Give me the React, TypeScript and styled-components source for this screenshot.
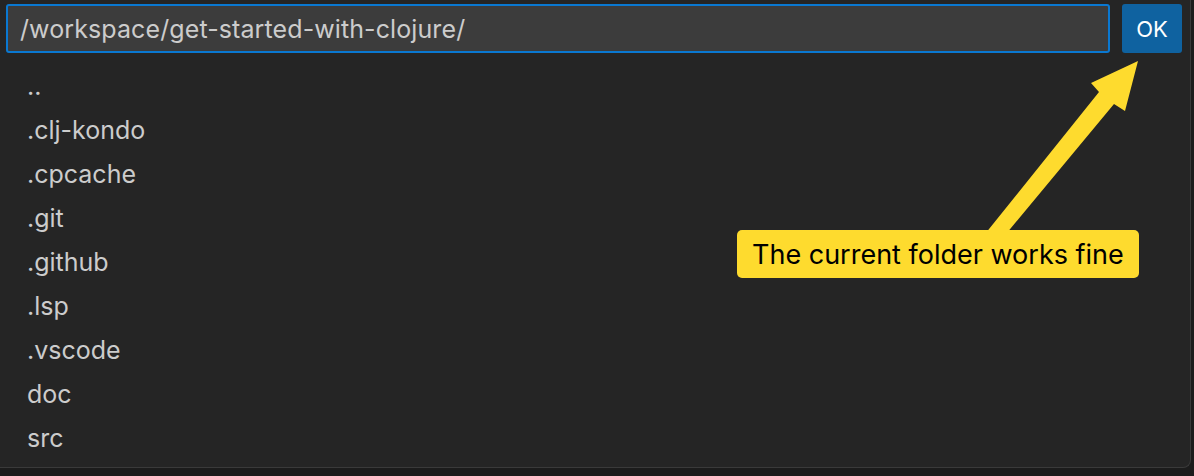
import * as React from 'react';
import styled, { createGlobalStyle } from 'styled-components';

const entries = ['..', '.clj-kondo', '.cpcache', '.git', '.github', '.lsp', '.vscode', 'doc', 'src'];

const GlobalStyle = createGlobalStyle`
  html, body {
    margin: 0;
    padding: 0;
    background: #1c1c1c;
  }

  body {
    font-family: Inter, "Noto Sans", sans-serif;
    -webkit-font-smoothing: antialiased;
  }
`;

const App: React.FC = () => {
  return (
    <>
      <GlobalStyle />
      <Page>
        <Panel>
          <Header>
            <PathInput>/workspace/get-started-with-clojure/</PathInput>
            <OkButton>OK</OkButton>
          </Header>
          <List>
            {entries.map((name) => (
              <Row key={name}>{name}</Row>
            ))}
          </List>
        </Panel>

        <Arrow width="1194" height="476" viewBox="0 0 1194 476">
          <polygon
            points="1138,61 1091,83 1099,92 985,234 1006,234 1114,104 1125,111"
            fill="#fedb2e"
          />
        </Arrow>
        <Callout>The current folder works fine</Callout>
      </Page>
    </>
  );
};

export default App;

const Page = styled.div`
  position: relative;
  width: 1194px;
  height: 476px;
  overflow: hidden;
`;

const Panel = styled.div`
  display: flex;
  flex-direction: column;
  height: 468px;
  box-sizing: border-box;
  background: #252525;
  border-bottom: 1px solid #3a3a3a;
  border-right: 1px solid #3a3a3a;
  border-bottom-right-radius: 8px;
  width: 1191px;
`;

const Header = styled.div`
  display: flex;
  align-items: stretch;
  gap: 12px;
  padding: 4px 0 0 6px;
  height: 53px;
  box-sizing: border-box;
`;

const PathInput = styled.div`
  display: flex;
  align-items: center;
  width: 1104px;
  box-sizing: border-box;
  padding: 0 12px;
  background: #3c3c3c;
  border: 2px solid #0a78d1;
  border-radius: 3px;
  color: #cccccc;
  font-size: 25px;
  letter-spacing: 0.1px;
`;

const OkButton = styled.div`
  display: flex;
  align-items: center;
  justify-content: center;
  width: 60px;
  background: #0f62a0;
  border-radius: 3px;
  color: #ffffff;
  font-size: 22px;
`;

const List = styled.div`
  display: flex;
  flex-direction: column;
  padding: 11px 0 0 27px;
`;

const Row = styled.div`
  height: 44px;
  line-height: 44px;
  color: #cccccc;
  font-size: 25px;
`;

const Arrow = styled.svg`
  position: absolute;
  top: 0;
  left: 0;
  pointer-events: none;
`;

const Callout = styled.div`
  position: absolute;
  left: 737px;
  top: 230px;
  width: 402px;
  height: 48px;
  box-sizing: border-box;
  display: flex;
  align-items: center;
  padding-left: 15px;
  background: #fedb2e;
  border-radius: 5px;
  color: #000000;
  font-size: 27px;
`;
